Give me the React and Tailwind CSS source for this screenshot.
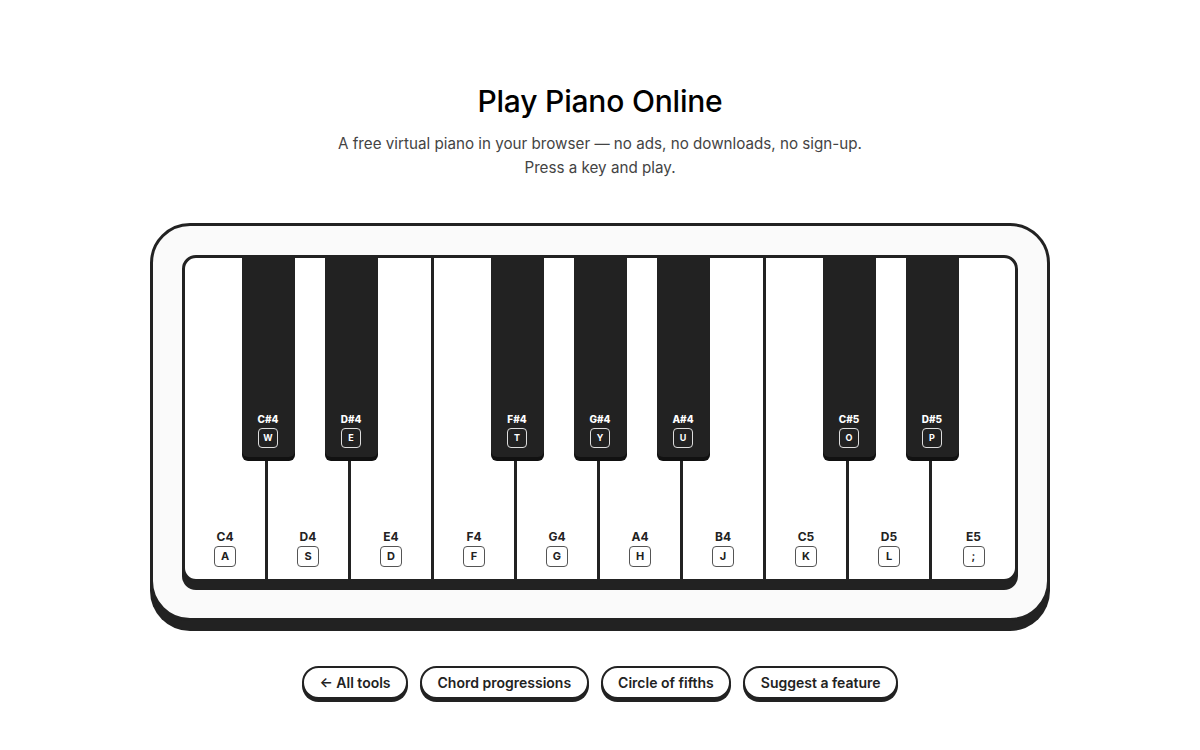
import React from "react";

const whites = [
  ["C4", "A"], ["D4", "S"], ["E4", "D"], ["F4", "F"], ["G4", "G"],
  ["A4", "H"], ["B4", "J"], ["C5", "K"], ["D5", "L"], ["E5", ";"],
];
const blacks = [
  [1, "C#4", "W"], [2, "D#4", "E"], [4, "F#4", "T"], [5, "G#4", "Y"],
  [6, "A#4", "U"], [8, "C#5", "O"], [9, "D#5", "P"],
];

export default function App() {
  return (
    <div
      className="min-h-[750px] w-full bg-white flex flex-col items-center pt-[83px] text-[#111]"
      style={{ fontFamily: "Inter, 'Noto Sans', sans-serif" }}
    >
      <h1 className="text-[30px] leading-9 font-medium text-black tracking-[-0.2px]">Play Piano Online</h1>
      <p className="mt-[13px] text-center text-[15.2px] leading-6 text-[#444]">
        A free virtual piano in your browser — no ads, no downloads, no sign-up.
        <br />
        Press a key and play.
      </p>

      <div className="mt-[43px] w-[900px] rounded-[40px] border-[3px] border-[#222] bg-[#fafafa] px-[29px] pt-[29px] pb-[36px] shadow-[0_10px_0_#222]">
        <div className="relative h-[327px] rounded-[14px] border-[3px] border-[#222] bg-white shadow-[0_8px_0_#222] overflow-hidden">
          <div className="flex h-full">
            {whites.map(([n, k], i) => (
              <div
                key={n}
                className={
                  "w-[83px] h-full flex flex-col items-center justify-end pb-[12px] " +
                  (i < 9 ? "border-r-[3px] border-[#222]" : "")
                }
              >
                <span className="text-[12px] leading-[14px] font-bold text-[#222]">{n}</span>
                <span className="mt-[2px] w-[22px] h-[21px] rounded-[4px] border border-[#555] flex items-center justify-center text-[11px] font-bold text-[#222]">
                  {k}
                </span>
              </div>
            ))}
          </div>
          {blacks.map(([i, n, k]) => (
            <div
              key={n}
              className="absolute top-0 w-[53px] h-[199px] rounded-b-[6px] bg-[#222] shadow-[0_4px_0_#111] flex flex-col items-center justify-end pb-[9px]"
              style={{ left: i * 83 - 26.5 }}
            >
              <span className="text-[10px] leading-[12px] font-extrabold text-white">{n}</span>
              <span className="mt-[3px] w-[20px] h-[20px] rounded-[4px] border border-[#ddd] flex items-center justify-center text-[9px] font-bold text-white">
                {k}
              </span>
            </div>
          ))}
        </div>
      </div>

      <div className="mt-[45px] flex gap-3">
        {["← All tools", "Chord progressions", "Circle of fifths", "Suggest a feature"].map((t) => (
          <button
            key={t}
            className="h-[33px] px-[15.5px] rounded-full border-2 border-[#222] bg-white shadow-[0_3px_0_#222] text-[14px] font-semibold text-[#222]"
          >
            {t}
          </button>
        ))}
      </div>
    </div>
  );
}
